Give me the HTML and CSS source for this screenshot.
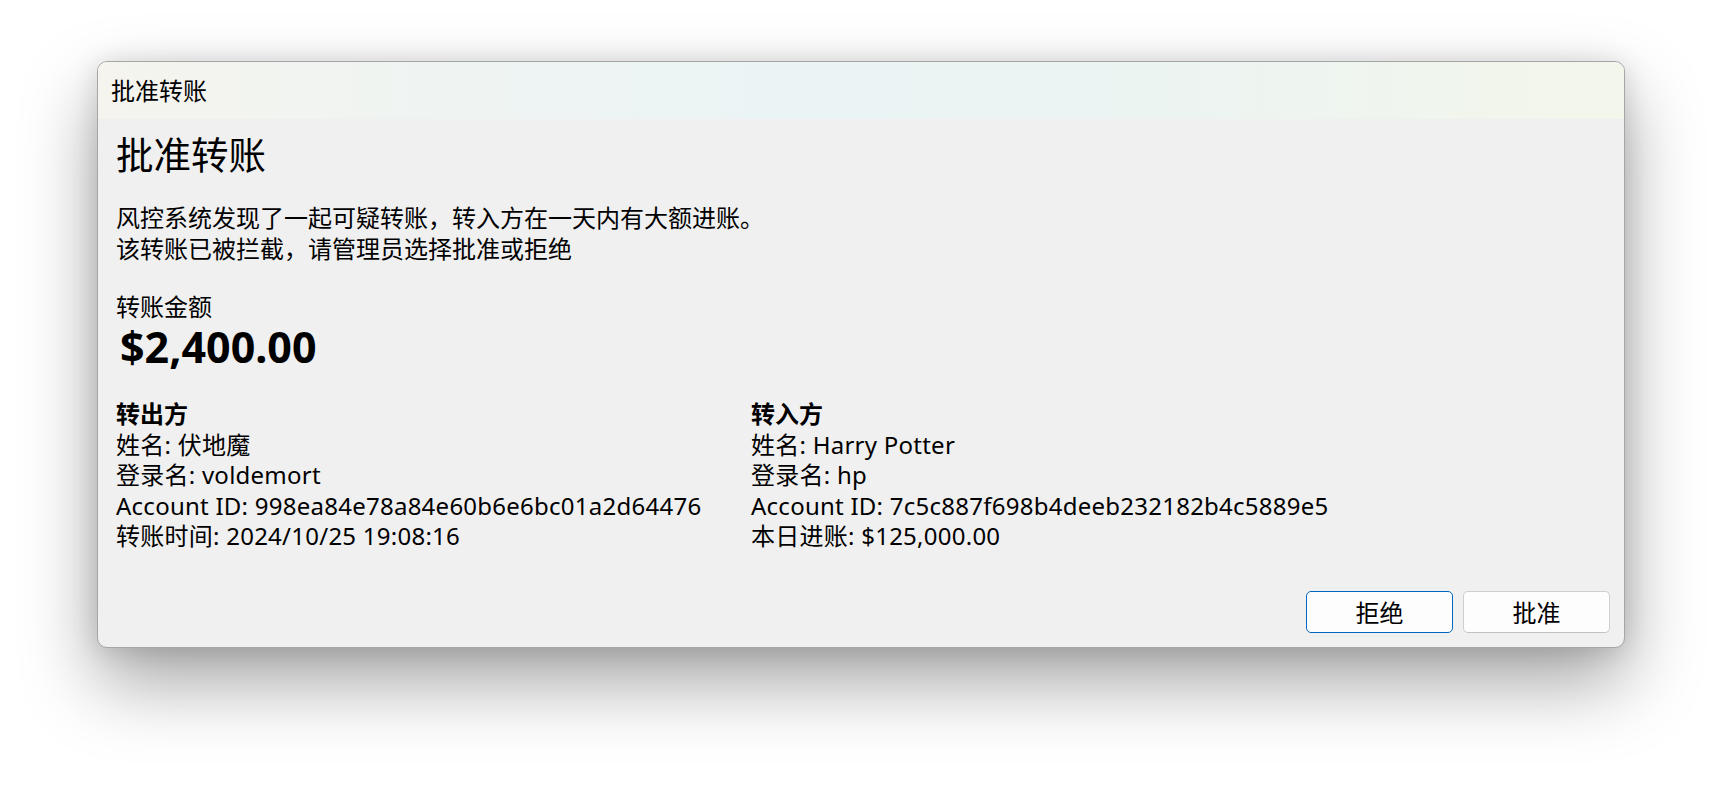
FILE: index.html
```html
<!DOCTYPE html>
<html lang="zh-CN">
<head>
<meta charset="utf-8">
<title>批准转账</title>
<link rel="stylesheet" href="styles.css">
</head>
<body>
<div class="window">
  <div class="titlebar">批准转账</div>
  <div class="content">
    <h1 class="heading">批准转账</h1>
    <p class="message">风控系统发现了一起可疑转账，转入方在一天内有大额进账。<br>该转账已被拦截，请管理员选择批准或拒绝</p>
    <div class="amount-label">转账金额</div>
    <div class="amount">$2,400.00</div>
    <div class="parties">
      <div class="party">
        <div class="party-title">转出方</div>
        <div class="line">姓名: 伏地魔</div>
        <div class="line">登录名: voldemort</div>
        <div class="line">Account ID: 998ea84e78a84e60b6e6bc01a2d64476</div>
        <div class="line">转账时间: 2024/10/25 19:08:16</div>
      </div>
      <div class="party">
        <div class="party-title">转入方</div>
        <div class="line">姓名: Harry Potter</div>
        <div class="line">登录名: hp</div>
        <div class="line">Account ID: 7c5c887f698b4deeb232182b4c5889e5</div>
        <div class="line">本日进账: $125,000.00</div>
      </div>
    </div>
    <div class="actions">
      <button class="btn btn-default">拒绝</button>
      <button class="btn">批准</button>
    </div>
  </div>
</div>
</body>
</html>
```
FILE: styles.css
```css
html, body {
  margin: 0;
  padding: 0;
  background: #ffffff;
}
html {
  min-height: 100%;
}
body {
  box-sizing: border-box;
  min-height: 808px;
  padding: 61px 0 0 97px;
  font-family: "Noto Sans", "Noto Sans CJK SC", sans-serif;
  color: #000;
}
.window {
  box-sizing: border-box;
  width: 1528px;
  height: 587px;
  border: 1px solid #a6a6a6;
  border-radius: 10px;
  background: #f0f0f0;
  overflow: hidden;
  display: flex;
  flex-direction: column;
  box-shadow: 0 34px 74px rgba(0, 0, 0, 0.36), 0 2px 26px rgba(0, 0, 0, 0.13);
}
.titlebar {
  height: 57px;
  flex: none;
  display: flex;
  align-items: center;
  padding-left: 13px;
  font-size: 24px;
  line-height: 31px;
  background: linear-gradient(90deg, #f5f4ee 0%, #eff4f2 22%, #ebf4f5 45%, #ecf4f2 70%, #f3f6ea 100%);
}
.content {
  flex: 1;
  display: flex;
  flex-direction: column;
  padding: 12px 14px 14px 18px;
}
.heading {
  margin: 0;
  font-size: 37.5px;
  font-weight: 400;
  line-height: 48px;
}
.message {
  margin: 23px 0 0;
  font-size: 24px;
  line-height: 31px;
}
.amount-label {
  margin-top: 30px;
  font-size: 24px;
  line-height: 26px;
}
.amount {
  padding-left: 4px;
  font-size: 43px;
  font-weight: 700;
  line-height: 54px;
}
.parties {
  margin-top: 25px;
  display: grid;
  grid-template-columns: 635px auto;
  font-size: 24px;
  line-height: 30.6px;
}
.party-title {
  font-weight: 700;
}
.line {
  letter-spacing: 0.25px;
}
.actions {
  margin-top: auto;
  display: flex;
  justify-content: flex-end;
  gap: 10px;
}
.btn {
  box-sizing: border-box;
  width: 147px;
  height: 42px;
  padding: 0;
  border: 1px solid #cfcfcf;
  border-bottom-color: #c2c2c2;
  border-radius: 5px;
  background: #fdfdfd;
  font-family: "Noto Sans", "Noto Sans CJK SC", sans-serif;
  font-size: 24px;
  line-height: 31px;
  color: #000;
}
.btn-default {
  border-color: #0067c0;
}
```
